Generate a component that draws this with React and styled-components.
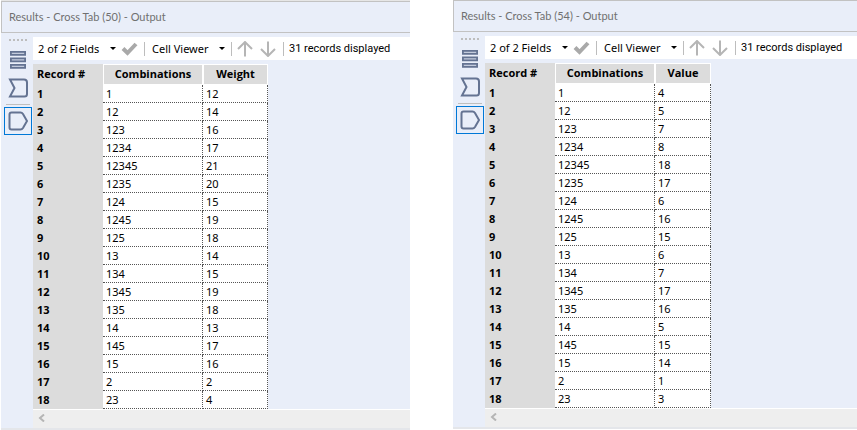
import React from "react";
import styled, { createGlobalStyle } from "styled-components";

const GlobalStyle = createGlobalStyle`
  * { box-sizing: border-box; }
  body { margin: 0; background: #fff; }
  button { margin: 0; padding: 0; border: 0; background: none; font: inherit; color: inherit; }
`;

const Page = styled.main`
  display: grid;
  grid-template-columns: minmax(0, 409fr) minmax(0, 404fr);
  gap: 43px;
  align-items: start;
  padding-left: 1px;
  font: 11px/18px "Noto Sans", "Open Sans", sans-serif;
  color: #000;
`;

const Panel = styled.section`
  border-top: ${(p) => (p.$framed ? "1px solid #e6e6e6" : "0")};
  border-bottom: 2px solid #e4e6ea;
  background: #e9eef9;
  overflow: hidden;
`;

const Title = styled.h2`
  margin: 0;
  height: 32px;
  padding-left: 7px;
  border: 1px solid #c2c2c2;
  border-right: 0;
  font: 400 11px/30px Lato, sans-serif;
  color: #707070;
  white-space: nowrap;
`;

const Body = styled.div`
  display: grid;
  grid-template-columns: 32px minmax(0, 1fr);
  padding-top: 4px;
`;

const Rail = styled.nav`
  display: flex;
  flex-direction: column;
  align-items: center;
  padding: 2px 1px 0 3px;
`;

const Grip = styled.div`
  width: 18px;
  height: 2px;
  margin-bottom: 5px;
  background: repeating-linear-gradient(90deg, #bdbdbd 0 2px, transparent 2px 4px);
`;

const RailButton = styled.button`
  display: grid;
  place-items: center;
  width: 28px;
  height: 28px;
  border: ${(p) => (p.$active ? "1px solid #0078d7" : "0")};
`;

const RailLine = styled.hr`
  width: 24px;
  height: 1px;
  margin: 2px 0;
  border: 0;
  background: #bfbfbf;
`;

const Toolbar = styled.div`
  display: flex;
  align-items: center;
  height: 23px;
  background: #fff;
  white-space: nowrap;
`;

const DropButton = styled.button`
  display: flex;
  flex: none;
  align-items: center;
  justify-content: space-between;
  width: ${(p) => p.$width}px;
  padding-left: 5px;
`;

const ToolButton = styled.button`
  display: grid;
  flex: none;
  place-items: center;
  width: ${(p) => p.$width}px;
  height: 23px;
`;

const Divider = styled.span`
  flex: none;
  width: 1px;
  height: 14px;
  margin: 0 ${(p) => p.$after}px 0 ${(p) => p.$before}px;
  background: #bdbdbd;
`;

const Count = styled.output`
  font: 11px/18px Roboto, sans-serif;
`;

const Main = styled.div`
  display: flex;
  flex-direction: column;
  gap: 4px;
`;

const Grid = styled.table`
  table-layout: fixed;
  width: ${(p) => p.$width}px;
  border-collapse: separate;
  border-spacing: 0;
`;

const Column = styled.col`
  width: ${(p) => p.$width}px;
`;

const Head = styled.th`
  height: 21px;
  padding: 0 0 2px;
  border: 1px solid #fff;
  background: #dcdcdc;
  font-family: "Open Sans", sans-serif;
  font-weight: 700;
  line-height: 17px;
`;

const Corner = styled(Head)`
  padding-left: 4px;
  border: 0;
  text-align: left;
`;

const RowNumber = styled.th`
  height: 18px;
  padding: 0 0 1px 4px;
  background: #dcdcdc;
  font-weight: 700;
  line-height: 17px;
  text-align: left;
`;

const Cell = styled.td`
  height: 18px;
  padding: 0 0 0 3px;
  border-right: 1px dotted #555;
  border-bottom: 1px dotted #555;
  background: #fff;
  line-height: 17px;
`;

const ScrollTrack = styled.div`
  height: 19px;
  margin-top: -4px;
  border-top: 1px solid #fff;
  background: #eee;
`;

const ScrollButton = styled.button`
  display: grid;
  place-items: center;
  width: 17px;
  height: 16px;
`;

const Caret = () => (
  <svg width="6" height="3" viewBox="0 0 6 3" aria-hidden="true">
    <path d="M0 0h6L3 3z" fill="#000" />
  </svg>
);

const Check = () => (
  <svg width="17" height="14" viewBox="0 0 17 14" aria-hidden="true">
    <path d="M2 6.5L6.5 11L15 2" fill="none" stroke="#a9a9a9" strokeWidth="4" />
  </svg>
);

const Arrow = ({ down }) => (
  <svg width="16" height="16" viewBox="0 0 16 16" aria-hidden="true">
    <path
      d={down ? "M8 0.5V14.5M1 8L8 15L15 8" : "M8 15.5V1.5M1 8L8 1L15 8"}
      fill="none"
      stroke="#b5b5b5"
      strokeWidth="2"
    />
  </svg>
);

const RailIcon = ({ kind }) => (
  <svg width="20" height="20" viewBox="0 0 20 20" fill="none" stroke="#647392" strokeWidth="2" aria-hidden="true">
    {kind === "fields" && (
      <g strokeWidth="1.8">
        <path d="M2.9 1.900h14.200v3H2.900zM2.900 8.400h14.200v3H2.900zM2.900 14.900h14.200v3H2.900z" fill="#c3cbdc" />
      </g>
    )}
    {kind === "input" && <path d="M2 1.500H16Q19 1.500 19 4.500V16Q19 18.500 16.500 18.500H2L6.500 10Z" />}
    {kind === "output" && (
      <path d="M3.500 1.500H12.500Q14 1.500 15 3L19 10L15 17Q14 18.500 12.500 18.500H3.500Q1.500 18.500 1.500 16.500V3.500Q1.500 1.500 3.500 1.500Z" />
    )}
  </svg>
);

const combinations = [
  "1", "12", "123", "1234", "12345", "1235", "124", "1245", "125",
  "13", "134", "1345", "135", "14", "145", "15", "2", "23",
];

const results = [
  {
    title: "Results - Cross Tab (50) - Output",
    measure: "Weight",
    measureWidth: 65,
    framed: true,
    values: [12, 14, 16, 17, 21, 20, 15, 19, 18, 14, 15, 19, 18, 13, 17, 16, 2, 4],
  },
  {
    title: "Results - Cross Tab (54) - Output",
    measure: "Value",
    measureWidth: 56,
    framed: false,
    values: [4, 5, 7, 8, 18, 17, 6, 16, 15, 6, 7, 17, 16, 5, 15, 14, 1, 3],
  },
];

function ResultsPanel({ title, measure, measureWidth, framed, values }) {
  return (
    <Panel $framed={framed} aria-label={title}>
      <Title>{title}</Title>
      <Body>
        <Rail aria-label="Result views">
          <Grip />
          <RailButton type="button" aria-label="Metadata"><RailIcon kind="fields" /></RailButton>
          <RailButton type="button" aria-label="Input anchor"><RailIcon kind="input" /></RailButton>
          <RailLine />
          <RailButton type="button" $active aria-pressed="true" aria-label="Output anchor">
            <RailIcon kind="output" />
          </RailButton>
        </Rail>
        <Main>
          <Toolbar role="toolbar" aria-label="Table tools">
            <DropButton type="button" $width={83} aria-haspopup="menu">2 of 2 Fields<Caret /></DropButton>
            <ToolButton type="button" $width={26} aria-label="Apply"><Check /></ToolButton>
            <Divider $before={2} $after={2} />
            <DropButton type="button" $width={78} aria-haspopup="menu">Cell Viewer<Caret /></DropButton>
            <Divider $before={6} $after={1} />
            <ToolButton type="button" $width={23} aria-label="Previous record"><Arrow /></ToolButton>
            <ToolButton type="button" $width={23} aria-label="Next record"><Arrow down /></ToolButton>
            <Divider $before={4} $after={5} />
            <Count>31 records displayed</Count>
          </Toolbar>
          <Grid $width={170 + measureWidth}>
            <colgroup>
              <Column $width={70} />
              <Column $width={100} />
              <Column $width={measureWidth} />
            </colgroup>
            <thead>
              <tr>
                <Corner scope="col">Record #</Corner>
                <Head scope="col">Combinations</Head>
                <Head scope="col">{measure}</Head>
              </tr>
            </thead>
            <tbody>
              {values.map((value, i) => (
                <tr key={combinations[i]}>
                  <RowNumber scope="row">{i + 1}</RowNumber>
                  <Cell>{combinations[i]}</Cell>
                  <Cell>{value}</Cell>
                </tr>
              ))}
            </tbody>
          </Grid>
          <ScrollTrack>
            <ScrollButton type="button" aria-label="Scroll left">
              <svg width="7" height="8" viewBox="0 0 7 8" aria-hidden="true">
                <path d="M6 0.500L2 4L6 7.500" fill="none" stroke="#b5b5b5" strokeWidth="2" />
              </svg>
            </ScrollButton>
          </ScrollTrack>
        </Main>
      </Body>
    </Panel>
  );
}

export default function App() {
  return (
    <>
      <GlobalStyle />
      <Page>
        {results.map((r) => (
          <ResultsPanel key={r.title} {...r} />
        ))}
      </Page>
    </>
  );
}
